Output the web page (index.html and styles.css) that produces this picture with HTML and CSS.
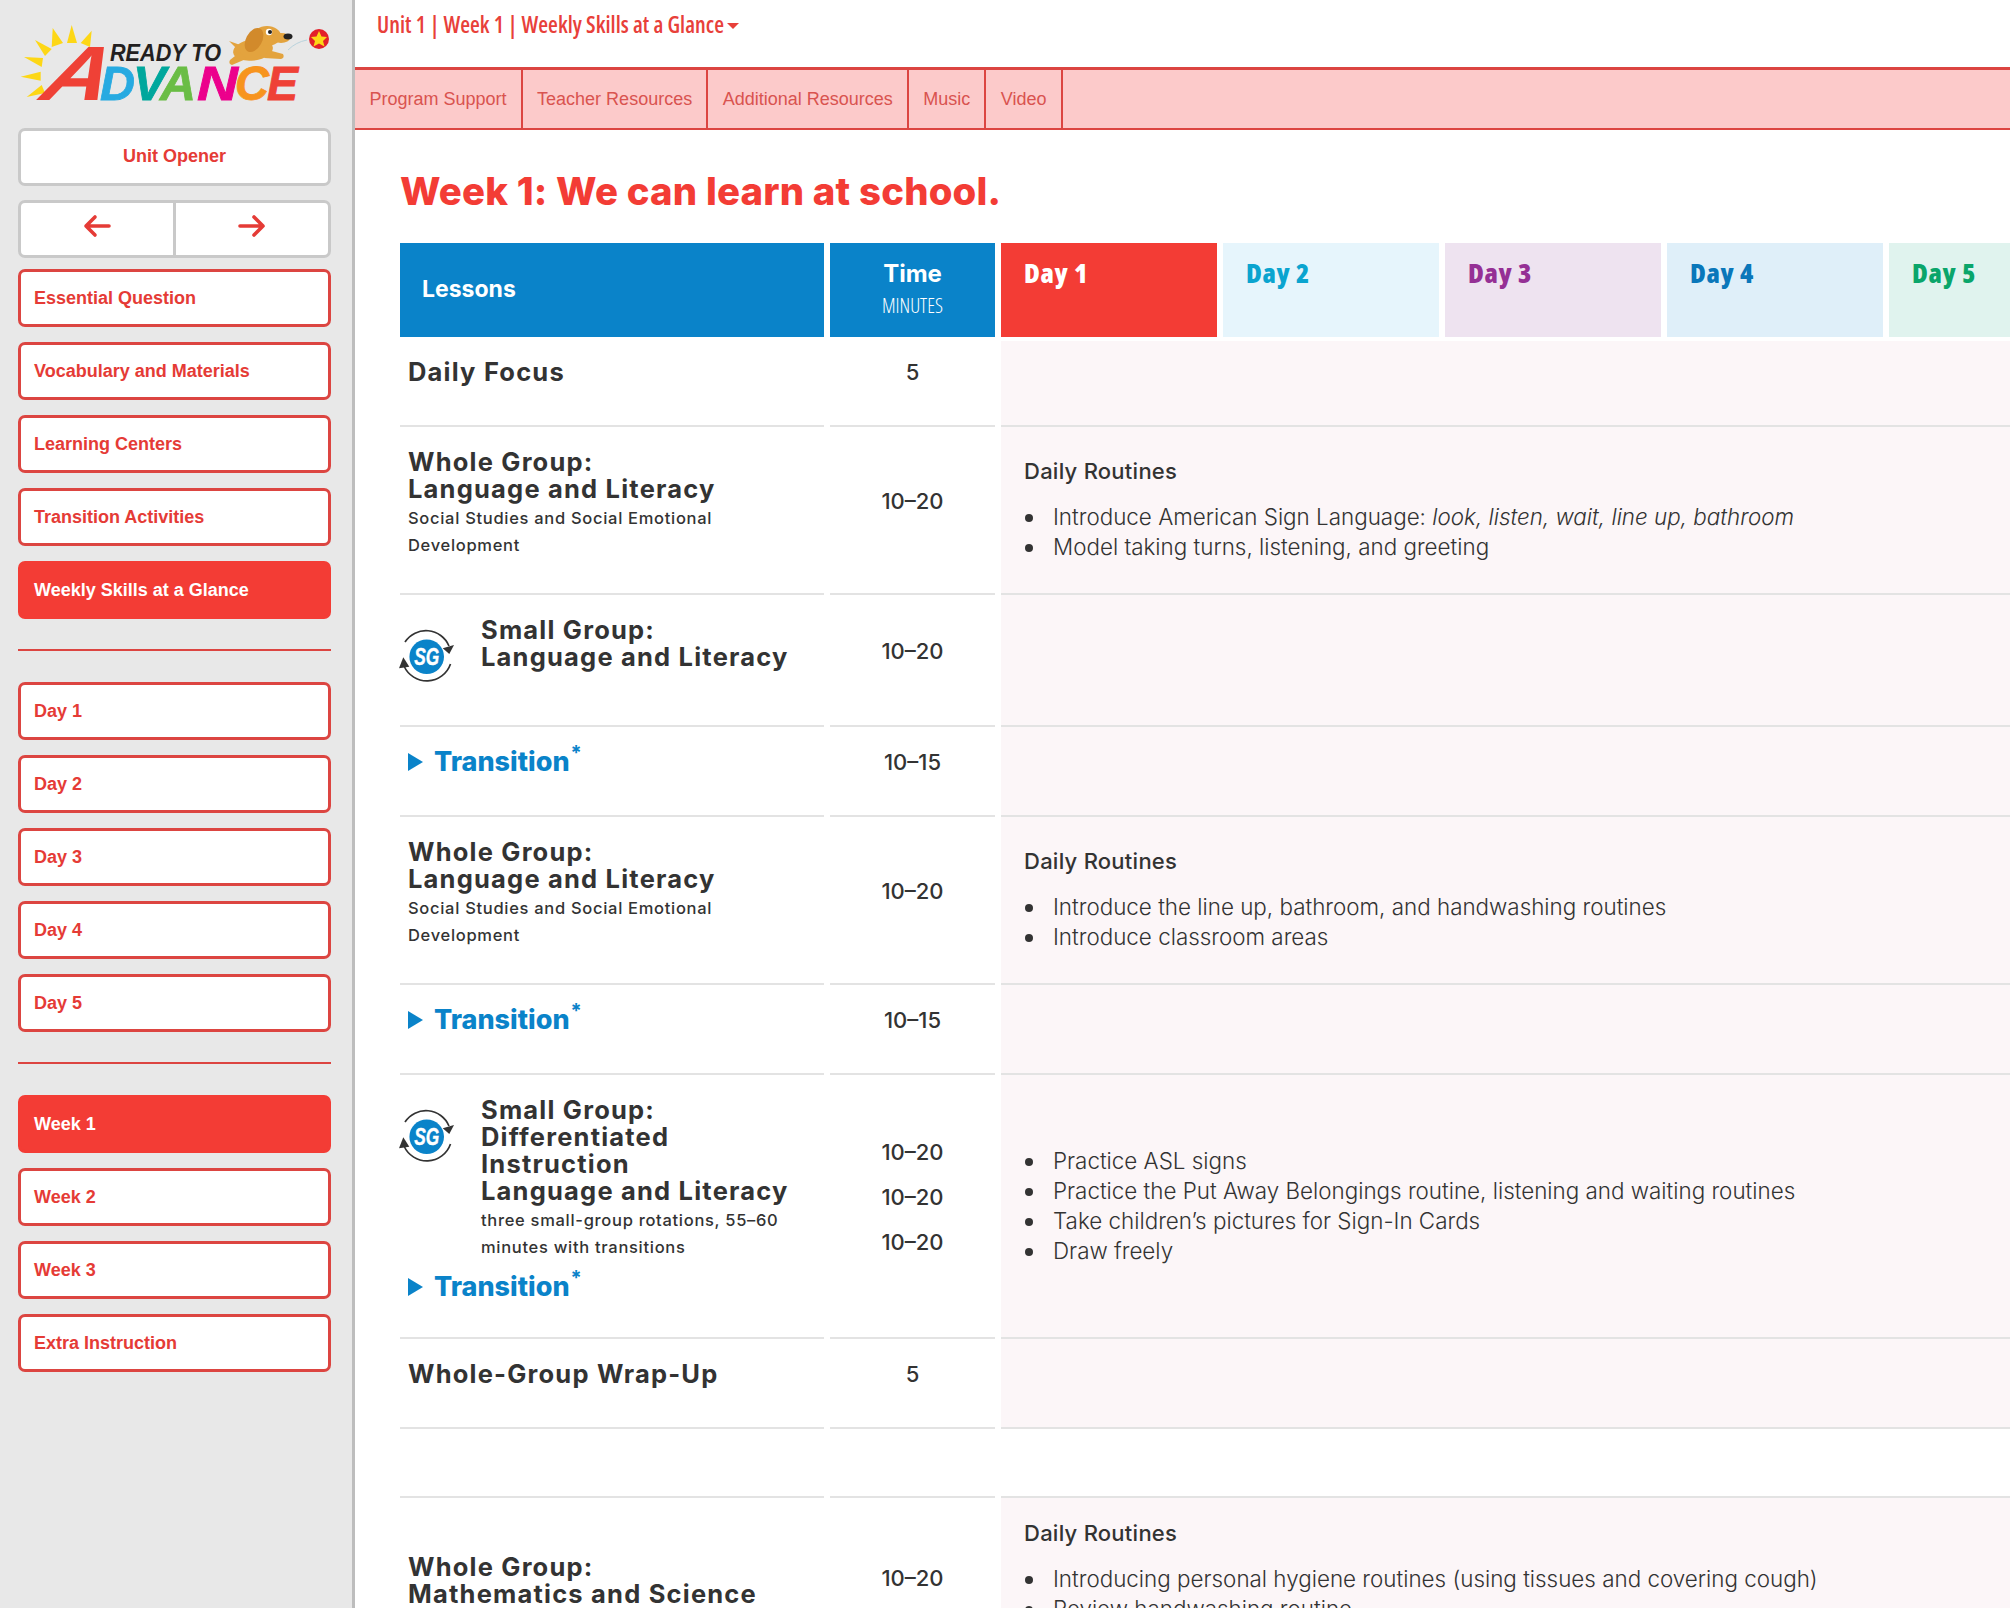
FILE: index.html
```html
<!DOCTYPE html>
<html lang="en">
<head>
<meta charset="utf-8">
<title>Weekly Skills at a Glance</title>
<link rel="stylesheet" href="styles.css">
</head>
<body>
<div class="app">
<aside class="sidebar">
  <svg class="logo" viewBox="0 0 354 128" width="354" height="128" role="img" aria-label="Ready to Advance">
    <g fill="#fdd716">
      <polygon points="71.7,25 77,43 67,43"/>
      <polygon points="52.7,28 63,43 51.7,47"/>
      <polygon points="91.7,30.7 90,47 80.7,43"/>
      <polygon points="35,40 51.7,49 45,56"/>
      <polygon points="24,57 43,58 41.7,67"/>
      <polygon points="20.7,76.7 40.7,71.7 40.7,80.7"/>
      <polygon points="26.7,97 41.7,85 45,93"/>
    </g>
    <text class="lg" transform="translate(38 100) skewX(-18)" font-size="77" fill="#ef4136" textLength="66" lengthAdjust="spacingAndGlyphs">A</text>
    <text class="lg" x="110" y="61" font-size="24" fill="#231f20" textLength="111" lengthAdjust="spacingAndGlyphs">READY TO</text>
    <text class="lg" x="100" y="100" font-size="48" fill="#27aae1" stroke="#27aae1" stroke-width=".8" textLength="35" lengthAdjust="spacingAndGlyphs">D</text>
    <text class="lg" x="133" y="100" font-size="48" fill="#00a79d" stroke="#00a79d" stroke-width=".8" textLength="33" lengthAdjust="spacingAndGlyphs">V</text>
    <text class="lg" x="160" y="100" font-size="48" fill="#6abd45" stroke="#6abd45" stroke-width=".8" textLength="36" lengthAdjust="spacingAndGlyphs">A</text>
    <text class="lg" x="197" y="100" font-size="48" fill="#ec008c" stroke="#ec008c" stroke-width=".8" textLength="41" lengthAdjust="spacingAndGlyphs">N</text>
    <text class="lg" x="235" y="100" font-size="48" fill="#f7941d" stroke="#f7941d" stroke-width=".8" textLength="34" lengthAdjust="spacingAndGlyphs">C</text>
    <text class="lg" x="267" y="100" font-size="48" fill="#ef4136" stroke="#ef4136" stroke-width=".8" textLength="31" lengthAdjust="spacingAndGlyphs">E</text>
    <g fill="#e3a33e">
      <polygon points="229,41 243,46 240,52"/>
      <ellipse cx="253" cy="50" rx="20" ry="10.5" transform="rotate(-8 253 50)"/>
      <ellipse cx="267" cy="36" rx="14" ry="10"/>
      <ellipse cx="281" cy="38" rx="9" ry="5"/>
      <path d="M268 50 L283 54 Q285 58 281 59 L264 58Z"/>
      <path d="M240 52 L230 60 Q228 64 232 65 L246 59Z"/>
    </g>
    <ellipse cx="254" cy="40" rx="8" ry="13" transform="rotate(28 254 40)" fill="#d28a2b"/>
    <circle cx="269" cy="32" r="3.2" fill="#fff"/>
    <circle cx="270" cy="32" r="2" fill="#222"/>
    <ellipse cx="288" cy="36.5" rx="4.5" ry="3" fill="#222"/>
    <path d="M288 50 Q296 42 307 40" fill="none" stroke="#b9d3dd" stroke-width="1"/>
    <circle cx="319" cy="39" r="10" fill="#e3202a"/>
    <polygon points="319,31 321.5,36.5 327,37 323,41 324.5,46.5 319,43.5 313.5,46.5 315,41 311,37 316.5,36.5" fill="#fdd716"/>
  </svg>

  <a class="btn btn-plain btn-center">Unit Opener</a>
  <div class="arrows">
    <a class="arrow"><svg viewBox="0 0 28 24" width="28" height="24"><path d="M26 12H3M12 3l-9 9 9 9" class="arrow-path"/></svg></a>
    <a class="arrow"><svg viewBox="0 0 28 24" width="28" height="24"><path d="M2 12h23M16 3l9 9-9 9" class="arrow-path"/></svg></a>
  </div>
  <nav class="group">
    <a class="btn">Essential Question</a>
    <a class="btn">Vocabulary and Materials</a>
    <a class="btn">Learning Centers</a>
    <a class="btn">Transition Activities</a>
    <a class="btn btn-active">Weekly Skills at a Glance</a>
  </nav>
  <hr class="rule">
  <nav class="group">
    <a class="btn">Day 1</a>
    <a class="btn">Day 2</a>
    <a class="btn">Day 3</a>
    <a class="btn">Day 4</a>
    <a class="btn">Day 5</a>
  </nav>
  <hr class="rule">
  <nav class="group">
    <a class="btn btn-active">Week 1</a>
    <a class="btn">Week 2</a>
    <a class="btn">Week 3</a>
    <a class="btn">Extra Instruction</a>
  </nav>
</aside>

<main class="main">
  <div class="crumb"><span class="crumb-text">Unit 1 | Week 1 | Weekly Skills at a Glance</span><span class="caret"></span></div>
  <div class="tabs">
    <a class="tab">Program Support</a>
    <a class="tab">Teacher Resources</a>
    <a class="tab">Additional Resources</a>
    <a class="tab">Music</a>
    <a class="tab">Video</a>
  </div>
  <div class="content">
    <h1 class="title">Week 1: We can learn at school.</h1>
    <div class="row head">
      <div class="h-lessons">Lessons</div>
      <div class="h-time"><span class="h-time-t">Time</span><span class="h-time-m">MINUTES</span></div>
      <div class="h-days">
        <div class="hday d1"><span>Day 1</span></div>
        <div class="hday d2"><span>Day 2</span></div>
        <div class="hday d3"><span>Day 3</span></div>
        <div class="hday d4"><span>Day 4</span></div>
        <div class="hday d5"><span>Day 5</span></div>
      </div>
    </div>

    <div class="row r90">
      <div class="c-lesson"><div class="l-title">Daily Focus</div></div>
      <div class="c-time"><span>5</span></div>
      <div class="c-day first"></div>
    </div>

    <div class="row r168">
      <div class="c-lesson"><div class="l-title">Whole Group:<br>Language and Literacy</div><div class="l-sub">Social Studies and Social Emotional<br>Development</div></div>
      <div class="c-time"><span>10–20</span></div>
      <div class="c-day"><h3 class="dr">Daily Routines</h3><ul class="list"><li>Introduce American Sign Language: <em>look, listen, wait, line up, bathroom</em></li><li>Model taking turns, listening, and greeting</li></ul></div>
    </div>

    <div class="row r132">
      <div class="c-lesson sg">
        <svg class="sg-icon" viewBox="0 0 56 56" width="56" height="56" role="img" aria-label="Small group"><use href="#sgi"/></svg>
        <div class="l-title">Small Group:<br>Language and Literacy</div>
      </div>
      <div class="c-time"><span>10–20</span></div>
      <div class="c-day"></div>
    </div>

    <div class="row r90">
      <div class="c-lesson"><div class="trans"><span class="tri"></span>Transition<sup class="ast">*</sup></div></div>
      <div class="c-time"><span>10–15</span></div>
      <div class="c-day"></div>
    </div>

    <div class="row r168">
      <div class="c-lesson"><div class="l-title">Whole Group:<br>Language and Literacy</div><div class="l-sub">Social Studies and Social Emotional<br>Development</div></div>
      <div class="c-time"><span>10–20</span></div>
      <div class="c-day"><h3 class="dr">Daily Routines</h3><ul class="list"><li>Introduce the line up, bathroom, and handwashing routines</li><li>Introduce classroom areas</li></ul></div>
    </div>

    <div class="row r90">
      <div class="c-lesson"><div class="trans"><span class="tri"></span>Transition<sup class="ast">*</sup></div></div>
      <div class="c-time"><span>10–15</span></div>
      <div class="c-day"></div>
    </div>

    <div class="row r264">
      <div class="c-lesson">
        <div class="sg">
          <svg class="sg-icon" viewBox="0 0 56 56" width="56" height="56" role="img" aria-label="Small group"><use href="#sgi"/></svg>
          <div><div class="l-title">Small Group:<br>Differentiated<br>Instruction<br>Language and Literacy</div><div class="l-sub">three small-group rotations, 55–60<br>minutes with transitions</div></div>
        </div>
        <div class="trans trans-after"><span class="tri"></span>Transition<sup class="ast">*</sup></div>
      </div>
      <div class="c-time stack"><span>10–20</span><span>10–20</span><span>10–20</span></div>
      <div class="c-day"><ul class="list"><li>Practice ASL signs</li><li>Practice the Put Away Belongings routine, listening and waiting routines</li><li>Take children’s pictures for Sign-In Cards</li><li>Draw freely</li></ul></div>
    </div>

    <div class="row r90">
      <div class="c-lesson"><div class="l-title">Whole-Group Wrap-Up</div></div>
      <div class="c-time"><span>5</span></div>
      <div class="c-day"></div>
    </div>

    <div class="row r69">
      <div class="c-lesson"></div>
      <div class="c-time"></div>
      <div class="c-day blank"></div>
    </div>

    <div class="row r180">
      <div class="c-lesson last"><div class="l-title">Whole Group:<br>Mathematics and Science</div></div>
      <div class="c-time"><span>10–20</span></div>
      <div class="c-day top"><h3 class="dr">Daily Routines</h3><ul class="list"><li>Introducing personal hygiene routines (using tissues and covering cough)</li><li>Review handwashing routine</li></ul></div>
    </div>
  </div>
</main>
</div>

<svg class="defs" width="0" height="0" aria-hidden="true">
  <symbol id="sgi" viewBox="0 0 56 56">
    <circle cx="27.7" cy="28.7" r="17.3" fill="#0a83c9"/>
    <text x="27.7" y="36.5" class="sg-text" textLength="25" lengthAdjust="spacingAndGlyphs">SG</text>
    <path d="M6 14 A25 25 0 0 1 50 18" fill="none" stroke="#333" stroke-width="1.7"/>
    <path d="M51.5 36 A25 25 0 0 1 5 38" fill="none" stroke="#333" stroke-width="1.7"/>
    <polygon points="55,17 43.7,20.3 50.3,26" fill="#333"/>
    <polygon points="0,40.3 4.3,29.3 10.3,38.7" fill="#333"/>
  </symbol>
</svg>
</body>
</html>
```
FILE: styles.css
```css
* { box-sizing: border-box; }
html, body { margin: 0; padding: 0; height: 1608px; overflow: hidden; background: #fff; }
body { font-family: "Inter", "Liberation Sans", sans-serif; color: #333; }
.defs { position: absolute; }
.app { display: flex; width: 2010px; height: 1608px; overflow: hidden; }

/* Sidebar */
.sidebar { flex: 0 0 355px; width: 355px; background: #e8e8e8; border-right: 3px solid #bdbdbd; padding: 0 0 0 18px; display: flex; flex-direction: column; }
.logo { display: block; margin-left: -18px; flex: none; }
.lg { font-family: "Liberation Sans", sans-serif; font-weight: 700; font-style: italic; }
.btn { display: flex; align-items: center; width: 313px; height: 58px; padding: 0 13px; background: #fff; border: 3px solid #dc4541; border-radius: 7px; color: #e53b36; font: 700 18px "Liberation Sans", sans-serif; flex: none; }
.btn-plain { border-color: #c9c9c9; padding-bottom: 1px; }
.btn-center { justify-content: center; }
.btn-active { background: #f33c35; border-color: #f33c35; color: #fff; }
.arrows { display: flex; width: 313px; height: 58px; margin: 14px 0 11px; background: #fff; border: 3px solid #c9c9c9; border-radius: 7px; overflow: hidden; flex: none; }
.arrow { flex: 1; display: flex; align-items: center; justify-content: center; padding-bottom: 6px; }
.arrow + .arrow { border-left: 3px solid #c9c9c9; }
.arrow-path { fill: none; stroke: #e53b36; stroke-width: 3.6; stroke-linecap: round; stroke-linejoin: round; }
.group { display: flex; flex-direction: column; gap: 15px; }
.rule { width: 313px; height: 2px; margin: 30px 0 31px; border: 0; background: #dc4541; flex: none; }

/* Main */
.main { flex: 1; min-width: 0; display: flex; flex-direction: column; }
.crumb { height: 67px; padding: 11px 0 0 22px; display: flex; align-items: flex-start; color: #e8403a; flex: none; }
.crumb-text { font: 600 22.5px/28px "Open Sans", sans-serif; font-stretch: 75%; white-space: nowrap; letter-spacing: .05px; }
.caret { width: 0; height: 0; margin: 12px 0 0 3px; border-left: 6px solid transparent; border-right: 6px solid transparent; border-top: 6px solid #e8403a; }
.tabs { height: 63px; display: flex; background: #fccaca; border-top: 3px solid #dc4541; border-bottom: 2px solid #dc4541; flex: none; }
.tab { display: flex; align-items: center; padding: 0 14px 0 14.5px; border-right: 2px solid #dc4541; color: #d9534f; font: 400 18px "Liberation Sans", sans-serif; white-space: nowrap; }

.content { padding: 0 0 0 45px; }
.title { margin: 38px 0 29px; height: 46px; font: 800 38.3px/46px "Inter", sans-serif; color: #f33c35; white-space: nowrap; letter-spacing: .2px; }

.row { display: grid; grid-template-columns: 424px 165px 1103px; column-gap: 6px; width: 1604px; }
.head { height: 94px; }
.h-lessons { background: #0a83c9; color: #fff; font: 700 23px/92px "Inter", sans-serif; padding-left: 22px; }
.h-time { background: #0a83c9; color: #fff; display: flex; flex-direction: column; align-items: center; padding-top: 16px; }
.h-time-t { font: 700 24px/29px "Inter", sans-serif; }
.h-time-m { font: 300 20px/30px "Open Sans", sans-serif; font-stretch: 75%; margin-top: 3px; }
.h-days { display: flex; gap: 6px; }
.hday { flex: 0 0 216px; padding: 15px 0 0 23px; font: 800 27px/30px "Open Sans", sans-serif; font-stretch: 75%; letter-spacing: .7px; }
.d1 { background: #f33c35; color: #fff; }
.d2 { background: #e6f5fc; color: #0aa4cf; }
.d3 { background: #eee3f0; color: #953095; }
.d4 { background: #dfeff9; color: #0a77ba; }
.d5 { background: #e0f3ee; color: #0aa56a; }

.r90 { height: 90px; }
.r69 { height: 69px; }
.r132 { height: 132px; }
.r168 { height: 168px; }
.r180 { height: 180px; }
.r264 { height: 264px; }

.c-lesson { padding: 21px 0 0 8px; border-bottom: 2px solid #e3e3e3; }
.c-lesson.last { padding-top: 55px; }
.l-title { font: 700 25.5px/27px "Inter", sans-serif; color: #333; white-space: nowrap; letter-spacing: 1.2px; }
.l-sub { font: 500 16.5px/27px "Inter", sans-serif; color: #333; margin-top: 3px; white-space: nowrap; letter-spacing: .7px; }
.sg { display: flex; }
.c-lesson.sg { padding-left: 0; }
.sg-icon { flex: none; width: 56px; height: 56px; margin: 12px 26px 0 -1px; }
.c-lesson > .sg .sg-icon { margin-left: -9px; }
.sg-text { font: italic 700 23px "Liberation Sans", sans-serif; fill: #fff; stroke: #fff; stroke-width: .4px; text-anchor: middle; }
.trans { display: flex; font: 800 27px/27px "Inter", sans-serif; color: #0a83c9; white-space: nowrap; }
.trans-after { margin-top: 12px; }
.tri { flex: none; width: 0; height: 0; margin: 5px 11px 0 0; border-left: 15px solid #0a83c9; border-top: 9px solid transparent; border-bottom: 9px solid transparent; }
.ast { font: 700 20px/1 "Inter", sans-serif; margin: -5px 0 0 1px; }
.c-time { display: flex; flex-direction: column; align-items: center; justify-content: center; padding-bottom: 18px; border-bottom: 2px solid #e3e3e3; font: 500 22px/27px "Inter", sans-serif; color: #333; }
.c-time.stack { gap: 18px; }
.c-day { display: flex; flex-direction: column; justify-content: center; padding: 0 0 0 23px; background: #fcf6f8; border-bottom: 2px solid #e3e3e3; }
.c-day.first { margin-top: 4px; }
.c-day.blank { background: #fff; }
.c-day.top { justify-content: flex-start; padding-top: 22px; }
.dr { margin: 0 0 17px; font: 500 22px/27px "Inter", sans-serif; color: #333; letter-spacing: .25px; }
.list { margin: 0; padding: 0 0 0 29px; list-style: none; font: 300 22.4px/30px "Inter", sans-serif; color: #333; }
.list li::before { content: ""; display: inline-block; width: 8px; height: 8px; margin: 0 20px 3px -28px; border-radius: 50%; background: #333; }
.list em { font-style: italic; }
```
